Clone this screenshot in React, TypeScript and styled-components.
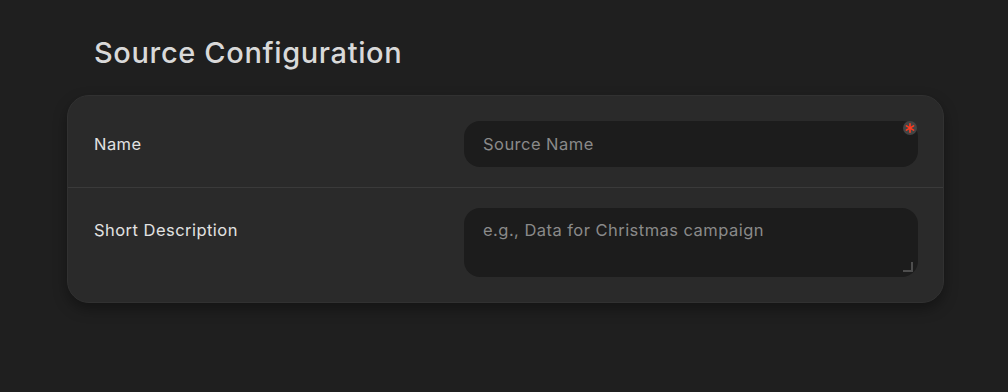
import React from 'react';
import styled, { createGlobalStyle } from 'styled-components';

const GlobalStyle = createGlobalStyle`
  html, body {
    margin: 0;
    padding: 0;
    background: #1f1f1f;
    font-family: Inter, "Noto Sans", sans-serif;
  }
  * {
    box-sizing: border-box;
  }
`;

const Page = styled.div`
  width: 1008px;
  height: 392px;
  padding: 32px 64px 0 67px;
  background: #1f1f1f;
`;

const Title = styled.h1`
  margin: 0 0 21px 27px;
  font-size: 29px;
  line-height: 42px;
  font-weight: 500;
  color: #d9d9d9;
  letter-spacing: 0.022em;
`;

const Card = styled.div`
  background: #2a2a2a;
  border: 1px solid #313131;
  border-radius: 22px;
  padding: 5px 0;
  box-shadow: 0 6px 14px rgba(0, 0, 0, 0.35);
`;

const Row = styled.div<{ $top?: boolean; $divider?: boolean }>`
  display: grid;
  grid-template-columns: 1fr 454px;
  align-items: ${(p) => (p.$top ? 'start' : 'center')};
  padding: 20px 25px 20px 26px;
  border-bottom: ${(p) => (p.$divider ? '1px solid #3a3a3a' : 'none')};
`;

const Label = styled.label<{ $top?: boolean }>`
  font-size: 16.5px;
  line-height: 22px;
  color: #e2e2e2;
  letter-spacing: 0.028em;
  padding-top: ${(p) => (p.$top ? '11px' : '0')};
`;

const Field = styled.div`
  position: relative;
`;

const TextInput = styled.input`
  display: block;
  width: 100%;
  height: 46px;
  padding: 0 19px;
  border: none;
  outline: none;
  border-radius: 16px;
  background: #1c1c1c;
  font-family: Inter, "Noto Sans", sans-serif;
  font-size: 16.5px;
  letter-spacing: 0.028em;
  color: #e2e2e2;
  &::placeholder {
    color: #8a8a8a;
  }
`;

const TextArea = styled.textarea`
  display: block;
  width: 100%;
  height: 69px;
  padding: 11px 19px;
  border: none;
  outline: none;
  resize: none;
  border-radius: 16px;
  background: #1c1c1c;
  font-family: Inter, "Noto Sans", sans-serif;
  font-size: 16.5px;
  line-height: 22px;
  letter-spacing: 0.028em;
  color: #e2e2e2;
  &::placeholder {
    color: #8a8a8a;
  }
`;

const Required = styled.span`
  position: absolute;
  top: 0;
  right: 1px;
  width: 14px;
  height: 14px;
  border-radius: 50%;
  background: #444444;
  display: flex;
  align-items: center;
  justify-content: center;
`;

const ResizeGrip = styled.span`
  position: absolute;
  right: 5px;
  bottom: 5px;
  width: 10px;
  height: 10px;
  border-right: 2px solid #4e4e4e;
  border-bottom: 2px solid #4e4e4e;
  pointer-events: none;
`;

const Asterisk = () => (
  <svg width="10" height="10" viewBox="0 0 10 10">
    <g stroke="#ff3b1f" strokeWidth="1.6" strokeLinecap="round">
      <line x1="5" y1="0.8" x2="5" y2="9.2" />
      <line x1="1.4" y1="2.9" x2="8.6" y2="7.1" />
      <line x1="1.4" y1="7.1" x2="8.6" y2="2.9" />
    </g>
  </svg>
);

export default function App() {
  return (
    <>
      <GlobalStyle />
      <Page>
        <Title>Source Configuration</Title>
        <Card>
          <Row $divider>
            <Label htmlFor="source-name">Name</Label>
            <Field>
              <TextInput id="source-name" placeholder="Source Name" />
              <Required>
                <Asterisk />
              </Required>
            </Field>
          </Row>
          <Row $top>
            <Label $top htmlFor="source-desc">
              Short Description
            </Label>
            <Field>
              <TextArea id="source-desc" placeholder="e.g., Data for Christmas campaign" />
              <ResizeGrip />
            </Field>
          </Row>
        </Card>
      </Page>
    </>
  );
}
